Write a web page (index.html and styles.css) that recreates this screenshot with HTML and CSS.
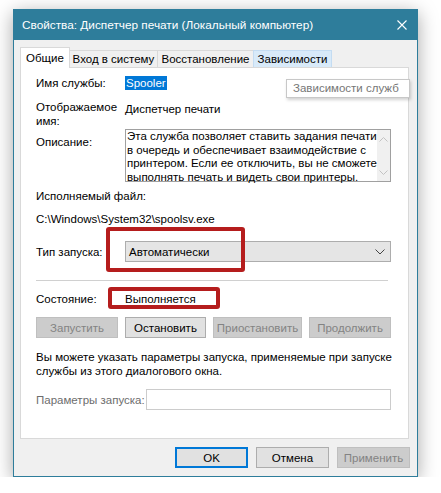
FILE: index.html
```html
<!DOCTYPE html>
<html lang="ru">
<head>
    <meta charset="UTF-8">
    <title>Свойства: Диспетчер печати</title>
    <link rel="stylesheet" href="styles.css">
</head>
<body>
<div class="window">
    <div class="titlebar">
        <span class="title">Свойства: Диспетчер печати (Локальный компьютер)</span>
        <svg class="close" width="10" height="10" viewBox="0 0 10 10">
            <path d="M0.5 0.5 L9.5 9.5 M9.5 0.5 L0.5 9.5" stroke="#fff" stroke-width="1.1" fill="none"/>
        </svg>
    </div>
    <div class="client">
        <div class="tabs">
            <div class="tab active">Общие</div>
            <div class="tab tab-logon">Вход в систему</div>
            <div class="tab tab-recovery">Восстановление</div>
            <div class="tab tab-deps hover">Зависимости</div>
        </div>
        <div class="panel">
            <div class="row row-name">
                <span class="label">Имя службы:</span>
                <span class="selected">Spooler</span>
            </div>
            <div class="row row-display">
                <span class="label">Отображаемое<br>имя:</span>
                <span class="value">Диспетчер печати</span>
            </div>
            <div class="row row-desc">
                <span class="label">Описание:</span>
                <div class="desc">
                    <div class="desc-text">Эта служба позволяет ставить задания печати<br>в очередь и обеспечивает взаимодействие с<br>принтером. Если ее отключить, вы не сможете<br>выполнять печать и видеть свои принтеры.</div>
                    <div class="scroll">
                        <svg width="9" height="5" viewBox="0 0 9 5"><path d="M0.5 4.5 L4.5 0.5 L8.5 4.5" stroke="#c2c2c2" fill="none"/></svg>
                        <svg width="9" height="5" viewBox="0 0 9 5"><path d="M0.5 0.5 L4.5 4.5 L8.5 0.5" stroke="#c2c2c2" fill="none"/></svg>
                    </div>
                </div>
            </div>
            <div class="line line-exe">Исполняемый файл:</div>
            <div class="line line-path">C:\Windows\System32\spoolsv.exe</div>
            <div class="row row-type">
                <span class="label">Тип запуска:</span>
                <div class="combo">
                    <span>Автоматически</span>
                    <svg width="10" height="6" viewBox="0 0 10 6"><path d="M0.5 0.5 L5 5 L9.5 0.5" stroke="#444" fill="none"/></svg>
                </div>
            </div>
            <div class="separator"></div>
            <div class="row row-state">
                <span class="label">Состояние:</span>
                <span class="value">Выполняется</span>
            </div>
            <div class="service-buttons">
                <button type="button" class="button disabled" style="width: 82px;">Запустить</button>
                <button type="button" class="button" style="width: 81px;">Остановить</button>
                <button type="button" class="button disabled" style="width: 89px;">Приостановить</button>
                <button type="button" class="button disabled" style="width: 82px;">Продолжить</button>
            </div>
            <p class="hint">Вы можете указать параметры запуска, применяемые при запуске<br>службы из этого диалогового окна.</p>
            <div class="row row-params">
                <span class="label-params">Параметры запуска:</span>
                <div class="input"></div>
            </div>

            <div class="tooltip">Зависимости служб</div>
            <div class="mark mark-type"></div>
            <div class="mark mark-state"></div>
        </div>
        <div class="dialog-buttons">
            <button type="button" class="button default">OK</button>
            <button type="button" class="button">Отмена</button>
            <button type="button" class="button disabled">Применить</button>
        </div>
    </div>
</div>
</body>
</html>
```

FILE: styles.css
```css
html {
    background: white;
}
body {
    margin: 0;
    font-family: "Liberation Sans", Arial, sans-serif;
    font-size: 11.5px;
    line-height: 14px;
    color: black;
    white-space: nowrap;
}
.window {
    box-sizing: border-box;
    width: 405px;
    height: 468px;
    margin: 9px 0 0 13px;
    border: 1px solid #2e7d9b;
    background: #f0f0f0;
    box-shadow: 0 4px 18px rgba(0,0,0,.35);
}
.titlebar {
    height: 30px;
    background: #2e7d9b;
    display: flex;
    align-items: center;
    justify-content: space-between;
    padding: 0 10px 0 8px;
}
.title {
    color: white;
    font-size: 11.8px;
}
.client {
    padding: 7px 8px 0 6px;
}
.tabs {
    display: flex;
    align-items: flex-end;
    height: 20px;
    position: relative;
    z-index: 1;
}
.tab {
    height: 17px;
    line-height: 16px;
    text-align: center;
    box-sizing: border-box;
    border: 1px solid #d9d9d9;
    border-bottom: none;
    margin-left: -1px;
    background: #f0f0f0;
}
.tab.active {
    width: 50px;
    height: 21px;
    margin-bottom: -1px;
    margin-left: 0;
    padding-top: 2px;
    background: white;
}
.tab-logon {
    width: 89px;
}
.tab-recovery {
    width: 97px;
}
.tab-deps {
    width: 79px;
}
.tab.hover {
    background: #d8eaf9;
    border-color: #c4dcf2;
}
.panel {
    position: relative;
    box-sizing: border-box;
    height: 372px;
    background: white;
    border: 1px solid #d9d9d9;
    padding: 8px 0 0 15px;
}
.row {
    display: flex;
    align-items: flex-start;
}
.label {
    width: 89px;
    flex: none;
}
.selected {
    background: #0078d7;
    color: white;
    padding: 0 1px;
}
.row-display {
    margin-top: 10px;
}
.row-display .value {
    padding-top: 2px;
}
.row-desc {
    margin-top: 1px;
}
.row-desc .label {
    padding-top: 6px;
}
.desc {
    box-sizing: border-box;
    width: 266px;
    height: 53px;
    border: 1px solid #a0a0a0;
    display: flex;
    justify-content: space-between;
}
.desc-text {
    line-height: 13.5px;
    padding: 0 0 0 1px;
}
.scroll {
    width: 16px;
    background: #f0f0f0;
    display: flex;
    flex-direction: column;
    justify-content: space-between;
    align-items: center;
    padding: 7px 0 6px 0;
}
.line-exe {
    margin-top: 7px;
}
.line-path {
    margin-top: 9px;
}
.row-type {
    margin-top: 15px;
    align-items: center;
}
.combo {
    box-sizing: border-box;
    width: 266px;
    height: 21px;
    background: #e5e5e5;
    border: 1px solid #adadad;
    display: flex;
    align-items: center;
    justify-content: space-between;
    padding: 0 5px 0 3px;
}
.separator {
    margin: 18px 20px 0 0;
    height: 1px;
    background: #d0d0d0;
}
.row-state {
    margin-top: 11px;
}
.service-buttons {
    display: flex;
    justify-content: space-between;
    width: 355px;
    margin-top: 11px;
}
.button {
    box-sizing: border-box;
    height: 21px;
    padding: 0;
    margin: 0;
    font-family: inherit;
    font-size: 11.5px;
    background: #e1e1e1;
    border: 1px solid #adadad;
    color: black;
}
.button.disabled {
    background: #cccccc;
    border-color: #bfbfbf;
    color: #838383;
}
.button.default {
    border-color: #0078d7;
    box-shadow: inset 0 0 0 1px #0078d7;
}
.hint {
    margin: 12px 0 0 0;
}
.row-params {
    margin-top: 11px;
    align-items: center;
}
.label-params {
    color: #6d6d6d;
    width: 110px;
    flex: none;
}
.input {
    box-sizing: border-box;
    width: 245px;
    height: 21px;
    border: 1px solid #cccccc;
    background: white;
}
.tooltip {
    position: absolute;
    left: 265px;
    top: 11px;
    width: 124px;
    height: 19px;
    box-sizing: border-box;
    border: 1px solid #c8c8c8;
    background: white;
    color: #767676;
    font-size: 11.5px;
    line-height: 17px;
    padding-left: 6px;
    box-shadow: 1px 2px 3px rgba(0,0,0,.18);
}
.mark {
    position: absolute;
    box-sizing: border-box;
    border: 4px solid #b51d1d;
    border-radius: 3px;
}
.mark-type {
    left: 85px;
    top: 159px;
    width: 139px;
    height: 45px;
}
.mark-state {
    left: 87px;
    top: 219px;
    width: 112px;
    height: 22px;
}
.dialog-buttons {
    display: flex;
    justify-content: flex-end;
    gap: 8px;
    margin: 8px -1px 0 0;
}
.dialog-buttons .button {
    width: 73px;
}
```
